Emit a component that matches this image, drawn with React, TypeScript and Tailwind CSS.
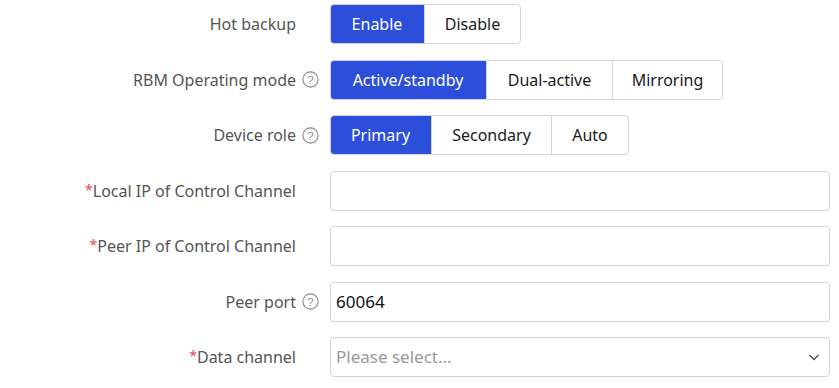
import React from "react";

const font = { fontFamily: '"Noto Sans", "Liberation Sans", sans-serif' };

const HelpIcon = () => (
    <svg width="17" height="17" viewBox="0 0 17 17" className="text-[#8a8a8a]">
        <circle cx="8.5" cy="8.5" r="7.6" fill="none" stroke="currentColor" strokeWidth="1.1" />
        <text x="8.5" y="12.6" textAnchor="middle" fontSize="11.5" fill="currentColor" fontFamily="Liberation Sans, sans-serif">
            ?
        </text>
    </svg>
);

interface RowProps {
    label: string;
    required?: boolean;
    help?: boolean;
    children: React.ReactNode;
}

const Row: React.FC<RowProps> = ({ label, required, help, children }) => (
    <div className="flex items-center h-[40px]">
        <div className="w-[296px] text-right text-[16px] text-[#555] whitespace-nowrap">
            {required && <span className="text-[#e5475a] text-[14px] relative -top-[2px]">*</span>}
            {label}
        </div>
        <div className="w-[34px] flex items-center pl-[6px]">{help && <HelpIcon />}</div>
        {children}
    </div>
);

const Segmented: React.FC<{ options: { label: string; w: number }[] }> = ({ options }) => (
    <div className="flex h-[40px] rounded-[4px] border border-[#d4d4d4] overflow-hidden">
        {options.map((o, i) => (
            <div
                key={o.label}
                style={{ width: o.w }}
                className={
                    i === 0
                        ? "flex items-center justify-center bg-[#2b4fda] text-white text-[16px] -my-px -ml-px h-[40px]"
                        : "flex items-center justify-center text-[#1a1a1a] text-[16px] border-l border-[#d4d4d4]"
                }
            >
                {o.label}
            </div>
        ))}
    </div>
);

export default function App() {
    return (
        <div className="bg-white w-[839px] h-[388px] pt-[4px]" style={font}>
            <div className="flex flex-col gap-[15.5px]">
                <Row label="Hot backup">
                    <Segmented options={[{ label: "Enable", w: 94 }, { label: "Disable", w: 96 }]} />
                </Row>
                <Row label="RBM Operating mode" help>
                    <Segmented
                        options={[
                            { label: "Active/standby", w: 156 },
                            { label: "Dual-active", w: 126 },
                            { label: "Mirroring", w: 110 },
                        ]}
                    />
                </Row>
                <Row label="Device role" help>
                    <Segmented
                        options={[
                            { label: "Primary", w: 101 },
                            { label: "Secondary", w: 120 },
                            { label: "Auto", w: 77 },
                        ]}
                    />
                </Row>
                <Row label="Local IP of Control Channel" required>
                    <div className="w-[500px] h-[40px] rounded-[4px] border border-[#d4d4d4]" />
                </Row>
                <Row label="Peer IP of Control Channel" required>
                    <div className="w-[500px] h-[40px] rounded-[4px] border border-[#d4d4d4]" />
                </Row>
                <Row label="Peer port" help>
                    <div className="w-[500px] h-[40px] rounded-[4px] border border-[#d4d4d4] flex items-center px-[5px] text-[17px] text-[#111]">
                        60064
                    </div>
                </Row>
                <Row label="Data channel" required>
                    <div className="w-[500px] h-[40px] rounded-[4px] border border-[#d4d4d4] flex items-center justify-between pl-[5px] pr-[8px] text-[17px] text-[#9a9a9a]">
                        <span>Please select...</span>
                        <svg width="14" height="14" viewBox="0 0 14 14">
                            <path d="M2.5 5 L7 9.5 L11.5 5" fill="none" stroke="#555" strokeWidth="1.4" />
                        </svg>
                    </div>
                </Row>
            </div>
        </div>
    );
}
